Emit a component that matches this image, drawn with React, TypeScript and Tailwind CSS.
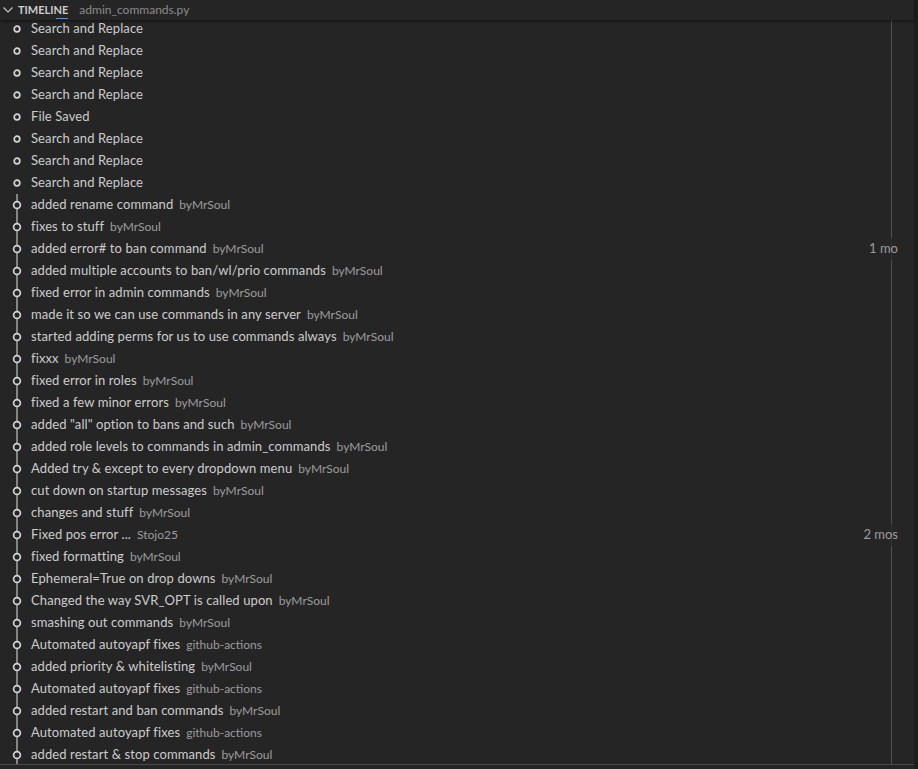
import React from 'react';

type Item = {
  label: string;
  desc?: string;
  time?: string;
  commit?: boolean;
};

const local = (label: string): Item => ({ label });
const git = (label: string, desc = 'byMrSoul', time?: string): Item => ({ label, desc, time, commit: true });

const items: Item[] = [
  local('Search and Replace'),
  local('Search and Replace'),
  local('Search and Replace'),
  local('Search and Replace'),
  local('File Saved'),
  local('Search and Replace'),
  local('Search and Replace'),
  local('Search and Replace'),
  git('added rename command'),
  git('fixes to stuff'),
  git('added error# to ban command', 'byMrSoul', '1 mo'),
  git('added multiple accounts to ban/wl/prio commands'),
  git('fixed error in admin commands'),
  git('made it so we can use commands in any server'),
  git('started adding perms for us to use commands always'),
  git('fixxx'),
  git('fixed error in roles'),
  git('fixed a few minor errors'),
  git('added "all" option to bans and such'),
  git('added role levels to commands in admin_commands'),
  git('Added try & except to every dropdown menu'),
  git('cut down on startup messages'),
  git('changes and stuff'),
  git('Fixed pos error ...', 'Stojo25', '2 mos'),
  git('fixed formatting'),
  git('Ephemeral=True on drop downs'),
  git('Changed the way SVR_OPT is called upon'),
  git('smashing out commands'),
  git('Automated autoyapf fixes', 'github-actions'),
  git('added priority & whitelisting'),
  git('Automated autoyapf fixes', 'github-actions'),
  git('added restart and ban commands'),
  git('Automated autoyapf fixes', 'github-actions'),
  git('added restart & stop commands'),
];

const ItemIcon = ({ commit }: { commit?: boolean }) => (
  <svg width="16" height="22" viewBox="0 0 16 22" className="shrink-0">
    {commit && <line x1="8" y1="0" x2="8" y2="22" stroke="#c5c5c5" strokeWidth="1.2" />}
    <circle cx="8" cy="11" r={commit ? 3.4 : 2.8} fill="#252526" stroke="#d4d4d4" strokeWidth="1.7" />
  </svg>
);

const Row = ({ item }: { item: Item }) => (
  <div className="relative flex h-[22px] items-center pl-[9px] pr-[16px] text-[13px] text-[#cccccc]">
    <ItemIcon commit={item.commit} />
    <div className="ml-[6px] flex min-w-0 flex-1 items-center whitespace-nowrap">
      <span className="tracking-[0.1px]">{item.label}</span>
      {item.desc && <span className="ml-[6px] text-[12px] text-[#cccccc] opacity-70">{item.desc}</span>}
    </div>
    {item.time && (
      <span className="flex h-full items-center bg-[#252526] pl-1 text-[13px] text-[#cccccc] opacity-70">
        {item.time}
      </span>
    )}
  </div>
);

export default function App() {
  return (
    <div
      className="flex h-[769px] w-[918px] overflow-hidden bg-[#252526]"
      style={{ fontFamily: 'Lato, "Noto Sans", sans-serif' }}
    >
      <div className="flex min-w-0 flex-1 flex-col">
        <div className="relative z-10 flex h-[20px] shrink-0 items-center bg-[#252526] shadow-[0_1px_3px_rgba(0,0,0,0.55)]">
          <svg width="16" height="20" viewBox="0 0 16 20" className="shrink-0">
            <polyline points="3.5,7.5 8,12 12.5,7.5" fill="none" stroke="#c5c5c5" strokeWidth="1.2" />
          </svg>
          <div className="relative ml-[2px] text-[11px] font-bold text-[#cccccc]">
            TIMELINE
            <span className="absolute left-[38px] top-[16px] h-[1px] w-[12px] bg-[#3794ff]" />
          </div>
          <span className="ml-[11px] text-[12px] text-[#8b8b8b]">admin_commands.py</span>
        </div>
        <div className="relative h-[745px] shrink-0 overflow-hidden border-b border-[#4a4a4a]">
          <div className="absolute bottom-0 left-[891px] top-0 w-px bg-[#4f4f4f]" />
          <div className="-mt-[2px]">
            {items.map((item, i) => (
              <Row key={i} item={item} />
            ))}
          </div>
        </div>
      </div>
      <div className="w-[4px] shrink-0 bg-[#1e1e1e]" />
    </div>
  );
}
